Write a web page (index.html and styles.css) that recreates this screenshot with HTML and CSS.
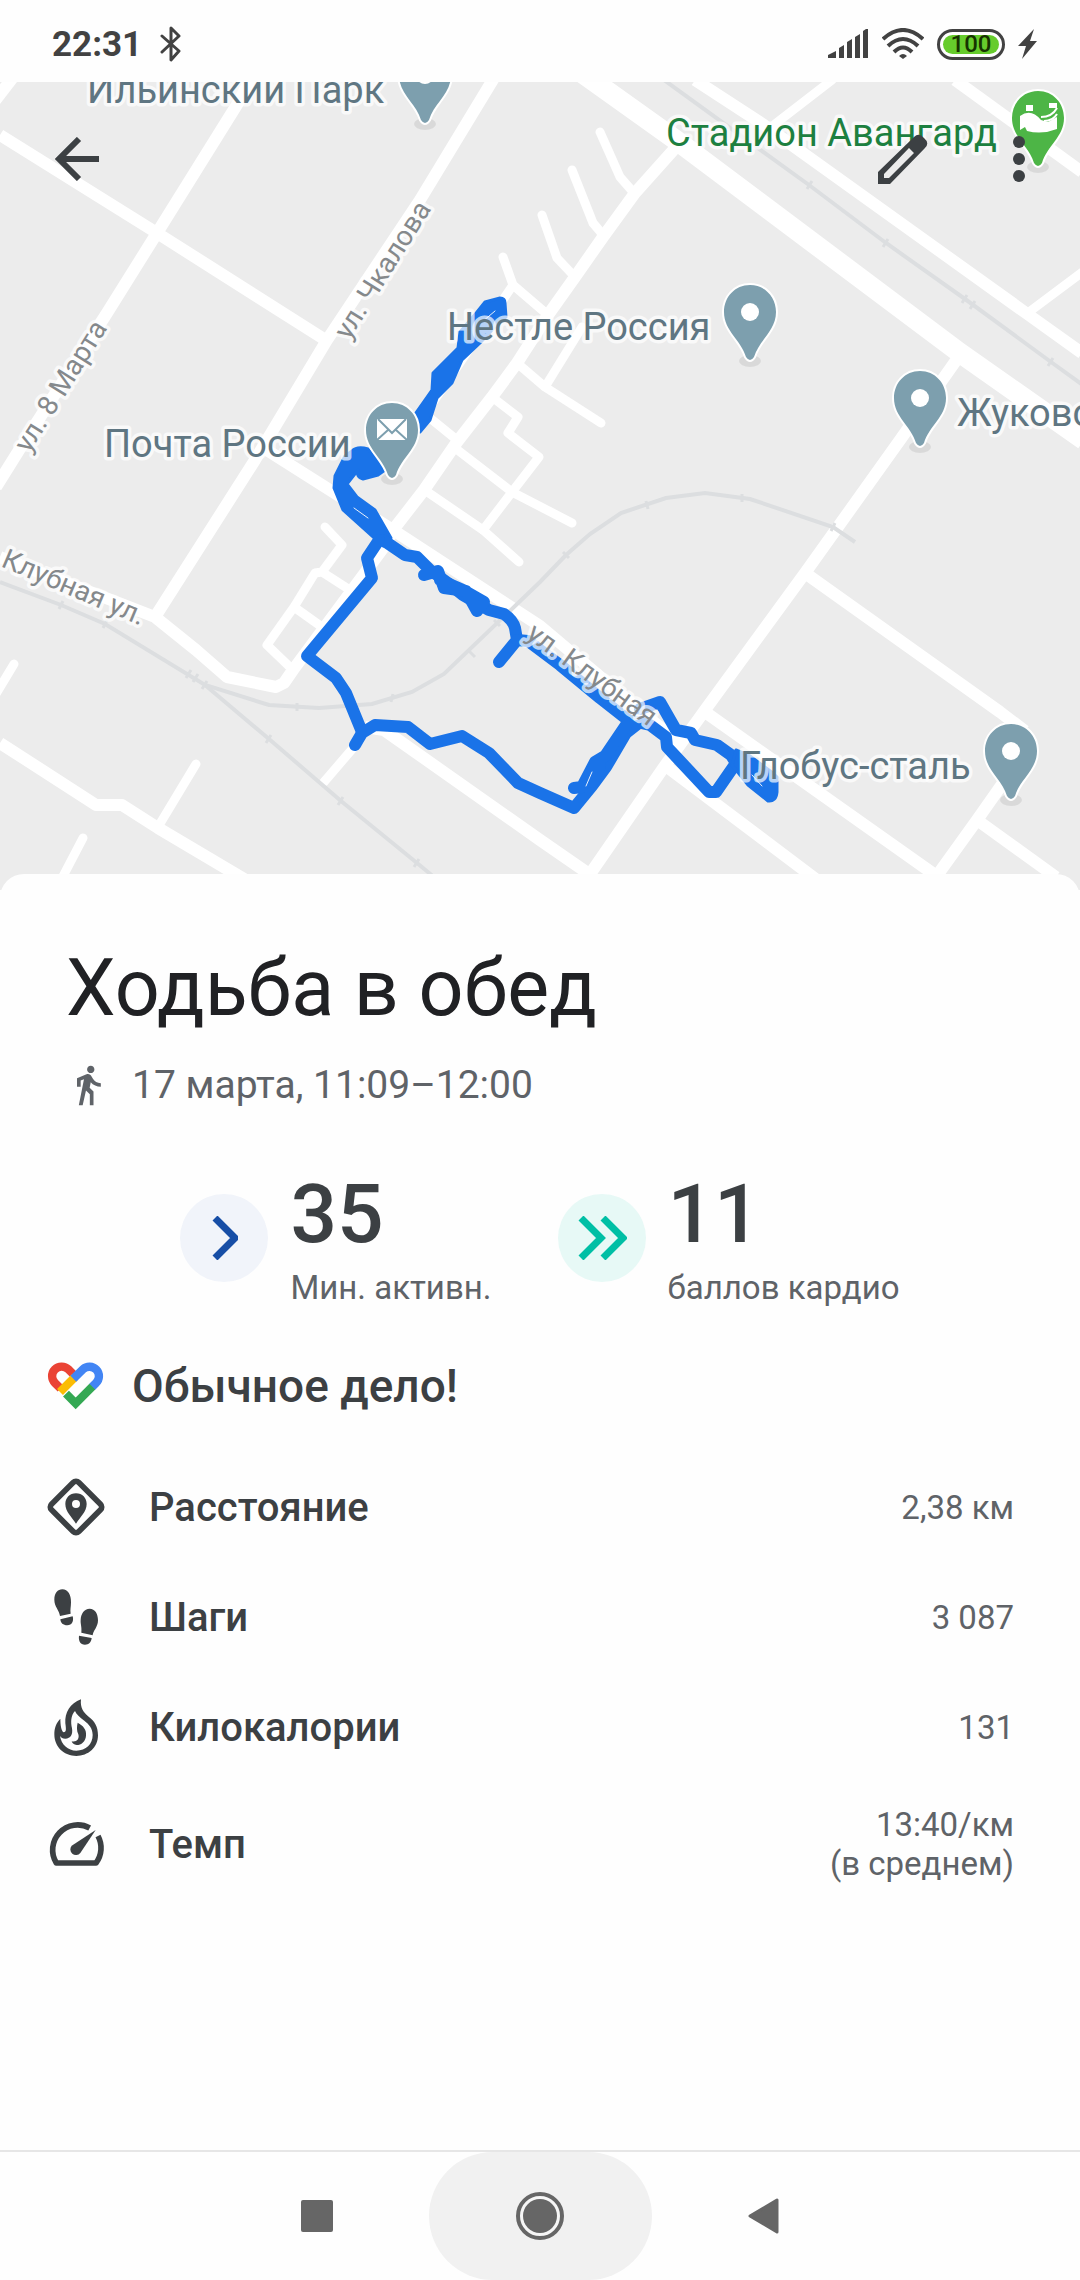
FILE: index.html
```html
<!DOCTYPE html>
<html lang="ru">
<head>
    <meta charset="UTF-8">
    <meta name="viewport" content="width=device-width, initial-scale=1.0">
    <title>Ходьба в обед</title>
    <link rel="stylesheet" href="styles.css">
</head>
<body>
    <div class="status-bar">
        <span class="time">22:31</span>
        <svg class="bluetooth" width="22" height="36" viewBox="0 0 22 36" fill="none" stroke="#424242" stroke-width="3" stroke-linejoin="round" stroke-linecap="round"><path d="M2 10 L19 25 L11 34 V2 L19 10 L2 26"/></svg>
        <div class="status-icons">
            <svg width="42" height="30" viewBox="0 0 42 30" fill="#424242"><path d="M1 29v-3l8-4v7zM12 29V19l5-3v13zM20 29V13l5-3v19zM28 29V8l5-3v24zM36 29V2l3-2h2v29z"/></svg>
            <svg width="42" height="32" viewBox="0 0 42 32" fill="none" stroke="#424242" stroke-width="4"><path d="M1 11 Q21 -7 41 11M6 18 Q21 4 36 18M12 24 Q21 15 30 24"/><path d="M17 28 Q21 24 25 28 L21 31Z" fill="#424242" stroke="none"/></svg>
            <span class="battery"><span class="battery-level">100</span></span>
            <svg width="20" height="30" viewBox="0 0 20 30" fill="#424242"><path d="M16 0 L0 17 H8 L4 30 L19 12 H12Z"/></svg>
        </div>
    </div>

    <div class="map-area">
        <svg class="map" viewBox="0 82 1080 808">
            <defs>
                <g id="pin">
                    <ellipse cx="0" cy="76" rx="11" ry="6" fill="#000" opacity="0.08"/>
                    <path d="M0 0 C-15 0 -26 12 -26 27 C-26 46 -9 55 -4 72 Q0 78 4 72 C9 55 26 46 26 27 C26 12 15 0 0 0Z" stroke="#fff" stroke-width="4" paint-order="stroke"/>
                </g>
            </defs>
            <rect y="82" width="1080" height="808" fill="#ececec"/>

            <!-- roads -->
            <g class="roads">
                <path d="M14 76 L-6 102"/>
                <path d="M0 135 L157 233 L324 339"/>
                <path d="M251 78 L238 103 L157 233 L107 313 L21 447 L-4 487"/>
                <path d="M494 78 L420 200 L327 340 L255 460 L155 617"/>
                <path d="M0 557 L155 617 L196 650 L227 677 L276 687 L284 683 L293 670 L384 547 L393 530 L424 490 L457 442 L492 397 L517 363 L548 315 L575 277 L603 237 L635 193 L677 146"/>
                <path d="M262 447 L393 530 L540 626 L680 744"/>
                <path d="M962 352 L900 440 L805 573 L705 710 L664 767 L588 877"/>
                <path d="M695 80 L764 125 L1026 313 L1082 353"/>
                <path d="M955 80 L1082 172"/>
                <path d="M805 573 L1000 712 L1025 731 M1003 783 L977 820 L936 877 M977 820 L1056 877"/>
                <path d="M705 712 L938 877 M667 767 L817 880"/>
                <path d="M365 727 L384 730 L540 840 L592 876"/>
                <path d="M0 743 L96 805 H122 L158 828 L244 879"/>
            </g>
            <path d="M575 68 L676 140 L960 353 L1084 440" fill="none" stroke="#fff" stroke-width="20"/>
            <g class="roads side">
                <path d="M503 257 L513 285 L548 315 M513 285 L425 414 L457 440"/>
                <path d="M542 215 L557 258 L575 277 M572 170 L593 223 L604 236 M600 132 L620 177 L634 193"/>
                <path d="M517 363 L545 387 L601 423 M545 387 L582 327"/>
                <path d="M492 397 L518 417 L508 433 L539 457 L512 492 L483 530"/>
                <path d="M455 448 L512 492 L572 523 M426 491 L483 530 L519 562"/>
                <path d="M325 527 L342 545 L322 572 L315 573 L294 607 L267 645 L293 670 M322 572 L350 590 M294 607 L322 627"/>
                <path d="M360 740 L324 782 M196 764 L158 827 M83 838 L60 882 M14 664 L-4 694"/>
                <path d="M832 80 L775 124 M1029 312 L1084 271"/>
            </g>

            <!-- railway -->
            <g class="rail">
                <path d="M664 80 L809 185 L886 243 L965 299 L1051 362 L1084 386"/>
                <path d="M0 582 L61 605 L105 624 L205 685 L269 705 L319 708 L372 704 L412 692 L444 674 L540 582 L566 555 L590 534 L621 513 L666 498 L705 493 L750 499 L833 527 L855 542"/>
                <path d="M205 685 L269 739 L341 801 L417 863 L440 882"/>
                <path class="ties" d="M807 189l5-8M883 247l5-8M962 303l5-8M970 309l5-8M1048 366l5-8M59 609l4-8M103 628l4-8M186 678l5-8M193 682l5-8M202 689l5-8M266 743l5-8M338 805l5-8M414 867l5-8M297 711v-8M391 702l2-8M469 651l6 6M494 620l6 6M563 552l6 6M646 501l2 8M742 494v8M831 531l4-8"/>
            </g>

            <!-- walked track -->
            <g class="track">
                <path class="area" d="M485 302 L500 298 Q505 298 505 303 L506 317 L495 327 L480 343 L462 360 L452 383 L437 398 L430 420 L420 432 L413 417 L432 390 L433 373 L458 348 L460 332 L477 312Z"/>
                <path class="area" d="M352 451 Q357 446 368 449 L385 470 L378 475 L363 479 Q356 477 358 470 L347 484 L357 497 L375 510 L391 538 L383 546 L343 510 L334 488 L335 476 L345 456Z"/>
                <path d="M383 540 L405 555 L417 557 L430 570 L448 583 L463 595 L489 610 L504 614 Q513 620 515 628 L517 640 L499 662"/>
                <path d="M424 575 L438 571 L444 588 L466 591 L477 611 L484 602 L463 590 L440 580"/>
                <path d="M517 640 L528 641 L560 665 L600 698 L628 720 L650 725 L666 737 L667 747 L709 792 H716 L736 763 L731 755 L717 745 L695 740 L691 733 L676 730 L660 702 L640 709"/>
                <path class="area" d="M736 750 L750 756 L773 773 L777 777 L777 792 Q776 802 768 801 L748 785 L732 765Z"/>
                <path d="M379 540 L367 558 L372 578 L307 656 L336 678 L346 693 L362 732"/>
                <path d="M355 745 L362 733 L375 725 L408 727 L430 744 L462 736 L489 753 L518 783 L540 793 L574 808 L592 786 L606 767 L626 733 L640 722"/>
                <path d="M574 788 L582 787 L595 762 L605 756 L628 722 M592 782 L600 766"/>
                <path class="gap" d="M495 311 L482 322 M354 508 L368 518 M592 772 L586 786 M752 775 L762 786"/>
            </g>

            <!-- map labels -->
            <g class="street">
                <text transform="translate(349 341) rotate(-58)">ул. Чкалова</text>
                <text transform="translate(29 454) rotate(-58)">ул. 8 Марта</text>
                <text transform="translate(0 566) rotate(23)">Клубная ул.</text>
                <text transform="translate(525 637) rotate(36)">ул. Клубная</text>
            </g>
            <g class="place">
                <text x="87" y="103">Ильинский Парк</text>
                <text x="447" y="340">Нестле Россия</text>
                <text x="104" y="457">Почта России</text>
                <text x="957" y="426">Жуковский</text>
                <text x="740" y="779">Глобус-сталь</text>
                <text class="park" x="666" y="146">Стадион Авангард</text>
            </g>
            <g fill="#7d9fae">
                <use href="#pin" x="425" y="48"/>
                <use href="#pin" x="750" y="285"/>
                <use href="#pin" x="920" y="371"/>
                <use href="#pin" x="1011" y="724"/>
                <use href="#pin" x="392" y="403"/>
                <use href="#pin" x="1038" y="91" fill="#4db546"/>
            </g>
            <g fill="#fff">
                <circle cx="425" cy="75" r="9"/>
                <circle cx="750" cy="312" r="9"/>
                <circle cx="920" cy="398" r="9"/>
                <circle cx="1011" cy="751" r="9"/>
                <rect x="377" y="419" width="30" height="21"/>
                <path d="M378 419 L392 433 L406 419 M377 440 L388 430 M407 440 L396 430" fill="none" stroke="#7d9fae" stroke-width="2"/>
                <path d="M1020 116 Q1031 108 1041 120 L1048 122 L1057 117 V129 Q1042 135 1027 131 L1025 127 L1020 130Z M1026 105h7v6h-7z M1049 103h8v5h-8z"/>
                <path d="M1041 117 Q1052 117 1057 108 M1044 121 Q1053 121 1057 114" fill="none" stroke="#fff" stroke-width="2"/>
            </g>
        </svg>

        <div class="app-bar">
            <button type="button" class="icon-btn" aria-label="Назад">
                <svg width="44" height="44" viewBox="0 0 44 44" fill="none" stroke="#3c4043" stroke-width="6"><path d="M44 22 H5 M24 2 L4 22 L24 42"/></svg>
            </button>
            <div class="actions">
                <button type="button" class="icon-btn" aria-label="Изменить">
                    <svg width="50" height="50" viewBox="0 0 50 50" fill="#3c4043" fill-rule="evenodd"><path d="M0 50 V38 L36 3 Q41 -2 46 4 Q52 9 47 14 L12 50Z M6 40 V44 H11 L36 19 L31 14Z"/></svg>
                </button>
                <button type="button" class="icon-btn" aria-label="Ещё">
                    <svg width="12" height="46" viewBox="0 0 12 46" fill="#3c4043"><circle cx="6" cy="6" r="6"/><circle cx="6" cy="23" r="6"/><circle cx="6" cy="40" r="6"/></svg>
                </button>
            </div>
        </div>
    </div>

    <main class="sheet">
        <h1>Ходьба в обед</h1>
        <div class="date">
            <svg width="44" height="44" viewBox="0 0 24 24" fill="#5f6368"><path d="M13.5 5.500c1.100 0 2-.9 2-2s-.9-2-2-2-2 .9-2 2 .9 2 2 2zM9.800 8.900L7 23h2.100l1.800-8 2.100 2v6h2v-7.500l-2.100-2 .6-3C14.800 12 16.800 13 19 13v-2c-1.900 0-3.500-1-4.300-2.400l-1-1.600c-.4-.6-1-1-1.700-1-.3 0-.5.1-.8.1L6 8.300V13h2V9.600l1.800-.7"/></svg>
            <span>17 марта, 11:09–12:00</span>
        </div>

        <div class="scores">
            <div class="score">
                <span class="badge move">
                    <svg width="27" height="44" viewBox="0 0 27 44" fill="none" stroke="#174ea6" stroke-width="7"><path d="M4 2 L24 22 L4 42"/></svg>
                </span>
                <div>
                    <div class="score-value">35</div>
                    <div class="score-label">Мин. активн.</div>
                </div>
            </div>
            <div class="score">
                <span class="badge cardio">
                    <svg width="50" height="44" viewBox="0 0 50 44" fill="none" stroke="#00bfa5" stroke-width="7"><path d="M4 2 L24 22 L4 42 M26 2 L46 22 L26 42"/></svg>
                </span>
                <div>
                    <div class="score-value">11</div>
                    <div class="score-label">баллов кардио</div>
                </div>
            </div>
        </div>

        <div class="headline">
            <svg width="64" height="64" viewBox="0 0 192 192" fill="none" stroke-width="25">
                <path stroke="#ea4335" d="M50 104 L33 87 A28 28 0 0 1 73 46 L92 65"/>
                <path stroke="#fbbc04" d="M93 69 L48 114"/>
                <path stroke="#4285f4" d="M88 74 L117 46 A28 28 0 0 1 156 87 L144 99"/>
                <path stroke="#34a853" d="M145 98 L95 148 L66 119"/>
            </svg>
            <h2>Обычное дело!</h2>
        </div>

        <dl class="metrics">
            <div class="metric">
                <svg width="64" height="64" viewBox="0 0 192 192" fill="#3c4043"><rect x="38" y="38" width="116" height="116" rx="12" transform="rotate(45 96 96)" fill="none" stroke="#3c4043" stroke-width="17"/><path fill-rule="evenodd" d="M96 55 C77 55 64 69 64 87 C64 111 84 126 96 146 C108 126 128 111 128 87 C128 69 115 55 96 55Z M96 75 A12 12 0 1 1 96 99 A12 12 0 1 1 96 75Z"/></svg>
                <dt>Расстояние</dt>
                <dd>2,38 км</dd>
            </div>
            <div class="metric">
                <svg width="64" height="64" viewBox="0 0 192 192" fill="#3c4043"><path d="M48 93 C46 75 31 65 31 44 C31 24 41 13 55 13 C72 13 82 30 81 52 C81 66 78 74 80 86Z M49 103 L86 94 C90 108 84 121 70 121 C57 121 50 114 49 103Z M112 143 C114 125 109 118 110 104 C111 86 120 71 137 71 C153 71 162 86 162 106 C162 126 147 138 146 151Z M105 152 L143 159 C142 172 134 179 123 179 C109 178 103 168 105 152Z"/></svg>
                <dt>Шаги</dt>
                <dd>3 087</dd>
            </div>
            <div class="metric">
                <svg width="64" height="64" viewBox="0 0 192 192" fill="#3c4043" fill-rule="evenodd"><path d="M111 13 C108 38 118 52 134 65 C152 79 162 94 162 121 C162 158 132 183 97 183 C61 183 31 157 31 118 C31 100 36 84 49 71 C49 90 52 108 59 112 C68 112 66 100 64 85 C62 52 78 25 111 13Z M93 48 C80 62 80 82 84 100 C87 118 80 131 64 131 C56 131 51 128 48 123 C52 149 72 167 97 167 C126 167 146 147 146 120 C146 100 135 88 121 77 C107 67 97 58 93 48Z M101 83 C118 92 128 104 126 122 C125 139 112 150 98 150 C90 149 85 146 83 139 C98 142 107 132 103 118 C98 108 98 95 101 83Z"/></svg>
                <dt>Килокалории</dt>
                <dd>131</dd>
            </div>
            <div class="metric">
                <svg width="64" height="64" viewBox="0 0 192 192" fill="#3c4043"><path d="M137 48 A75 75 0 0 0 37 153 H156 A75 75 0 0 0 162 72" fill="none" stroke="#3c4043" stroke-width="17" stroke-linejoin="round"/><path d="M155 54 L109 123 A17 17 0 1 1 83 101Z"/></svg>
                <dt>Темп</dt>
                <dd>13:40/км<br>(в среднем)</dd>
            </div>
        </dl>
    </main>

    <nav class="nav-bar">
        <button type="button" class="nav-btn" aria-label="Недавние">
            <svg width="32" height="32" viewBox="0 0 32 32"><rect width="32" height="32" rx="2" fill="#666"/></svg>
        </button>
        <button type="button" class="nav-btn pressed" aria-label="Домой">
            <svg width="50" height="50" viewBox="0 0 50 50"><circle cx="25" cy="25" r="22" fill="#f6f6f6" stroke="#666" stroke-width="4"/><circle cx="25" cy="25" r="17" fill="#666"/></svg>
        </button>
        <button type="button" class="nav-btn" aria-label="Назад">
            <svg width="32" height="36" viewBox="0 0 32 36"><path d="M3 18 L30 2 V34Z" fill="#666" stroke="#666" stroke-width="3" stroke-linejoin="round"/></svg>
        </button>
    </nav>
</body>
</html>
```
FILE: styles.css
```css
* {
    box-sizing: border-box;
}
body {
    display: flex;
    flex-direction: column;
    min-height: 100vh;
    margin: 0;
    background: #fefefe;
    color: #3c4043;
    font-family: Roboto, "Noto Sans", sans-serif;
}
button {
    display: flex;
    align-items: center;
    justify-content: center;
    padding: 0;
    border: none;
    background: none;
    cursor: pointer;
}
svg {
    display: block;
    flex-shrink: 0;
}
.status-bar {
    display: flex;
    align-items: center;
    height: 82px;
    padding: 6px 42px 0 52px;
    color: #424242;
}
.time {
    font-size: 35px;
    font-weight: 700;
}
.bluetooth {
    margin-left: 18px;
}
.status-icons {
    display: flex;
    align-items: center;
    gap: 13px;
    margin-left: auto;
}
.battery {
    padding: 3px;
    border: 3px solid #424242;
    border-radius: 16px;
}
.battery-level {
    display: block;
    width: 56px;
    border-radius: 10px;
    background: #66cc2c;
    color: #163300;
    font-size: 24px;
    font-weight: 500;
    line-height: 19px;
    text-align: center;
}

/* map */
.map-area {
    position: relative;
}
.map {
    width: 100%;
    height: auto;
}
.roads path {
    fill: none;
    stroke: #fff;
    stroke-width: 12;
    stroke-linejoin: round;
}
.side path {
    stroke-width: 9;
    stroke-linecap: round;
}
.rail path {
    fill: none;
    stroke: #dcdee0;
    stroke-width: 4;
}
.rail .ties {
    stroke-width: 3;
}
.track path {
    fill: none;
    stroke: #1a73e8;
    stroke-width: 12;
    stroke-linejoin: round;
    stroke-linecap: round;
}
.track .area {
    fill: #1a73e8;
    stroke-width: 3;
}
.track .gap {
    stroke: #e8f0fc;
    stroke-width: 1;
}
.street text,
.place text {
    stroke: rgba(255, 255, 255, 0.7);
    stroke-width: 7px;
    stroke-linejoin: round;
    paint-order: stroke;
}
.street text {
    fill: #85898c;
    font-size: 28px;
}
.place text {
    fill: #5f7682;
    font-size: 38px;
}
.place .park {
    fill: #1d8040;
}
.app-bar {
    position: absolute;
    top: 0;
    left: 0;
    right: 0;
    display: flex;
    justify-content: space-between;
    padding: 41px 37px 41px 39px;
}
.actions {
    display: flex;
    gap: 54px;
}
.icon-btn {
    width: 76px;
    height: 72px;
}
.actions .icon-btn:last-child {
    width: 48px;
}

/* activity details */
.sheet {
    position: relative;
    flex: 1;
    margin-top: -16px;
    padding: 66px 66px 40px;
    border-radius: 24px 24px 0 0;
    background: #fefefe;
}
h1 {
    margin: 0;
    color: #202124;
    font-size: 79px;
    font-weight: 400;
    line-height: 97px;
}
.date {
    display: flex;
    align-items: center;
    gap: 22px;
    margin-top: 24px;
    color: #5f6368;
    font-size: 39px;
    line-height: 48px;
}
.scores {
    display: flex;
    justify-content: center;
    gap: 66px;
    margin-top: 55px;
}
.score {
    display: flex;
    align-items: center;
    gap: 22px;
}
.badge {
    display: flex;
    align-items: center;
    justify-content: center;
    width: 88px;
    height: 88px;
    border-radius: 50%;
}
.badge.move {
    background: #f1f4fa;
}
.badge.cardio {
    background: #e7f9f6;
}
.score-value {
    font-size: 82px;
    font-weight: 500;
    line-height: 100px;
}
.score-label {
    color: #5f6368;
    font-size: 33px;
    line-height: 48px;
}
.headline {
    display: flex;
    align-items: center;
    gap: 24px;
    margin: 42px 0 34px -22px;
}
h2 {
    margin: 0;
    font-size: 46px;
    font-weight: 500;
    line-height: 64px;
}
.metrics {
    margin: 0 0 0 -22px;
}
.metric {
    display: flex;
    align-items: center;
    min-height: 110px;
    padding: 23px 0;
}
.metric dt {
    flex: 1;
    margin-left: 41px;
    font-size: 40px;
    font-weight: 500;
}
.metric dd {
    margin: 0;
    color: #5f6368;
    font-size: 33px;
    line-height: 39px;
    text-align: right;
}

.nav-bar {
    display: flex;
    justify-content: center;
    height: 130px;
    border-top: 2px solid #e6e6e6;
}
.nav-btn {
    width: 223px;
}
.nav-btn.pressed {
    border-radius: 64px;
    background: #f1f1f1;
}
```
